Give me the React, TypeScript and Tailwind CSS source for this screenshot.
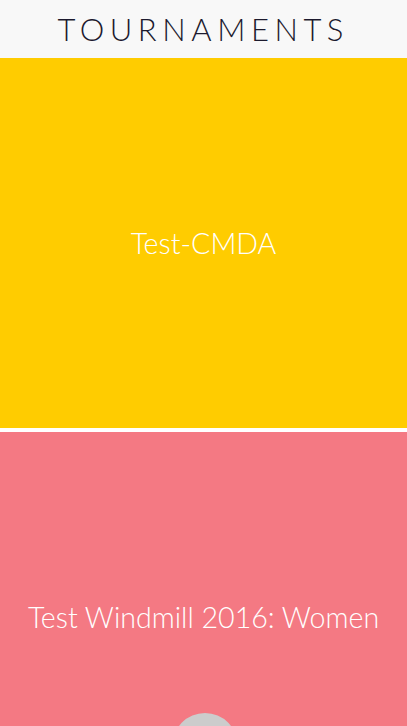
export default function App() {
  const tournaments = [
    { name: 'Test-CMDA', color: 'bg-[#ffcc00]' },
    { name: 'Test Windmill 2016: Women', color: 'bg-[#f47983]' },
  ]

  return (
    <div className="min-h-screen bg-white font-['Lato',sans-serif]">
      <header className="h-[58px] bg-[#f8f8f8] flex items-center justify-center">
        <h1 className="text-[31px] font-light tracking-[0.18em] text-[#1c1a2e] pr-[0.02em] leading-none">
          TOURNAMENTS
        </h1>
      </header>
      <main className="flex flex-col gap-[4px]">
        {tournaments.map((t) => (
          <div key={t.name} className={`${t.color} h-[370px] flex items-center justify-center`}>
            <span className="text-white text-[28.6px] font-light leading-none">{t.name}</span>
          </div>
        ))}
      </main>
      <button className="fixed left-[172px] top-[713px] w-[66px] h-[66px] rounded-full bg-[#cccccc]" />
    </div>
  )
}
